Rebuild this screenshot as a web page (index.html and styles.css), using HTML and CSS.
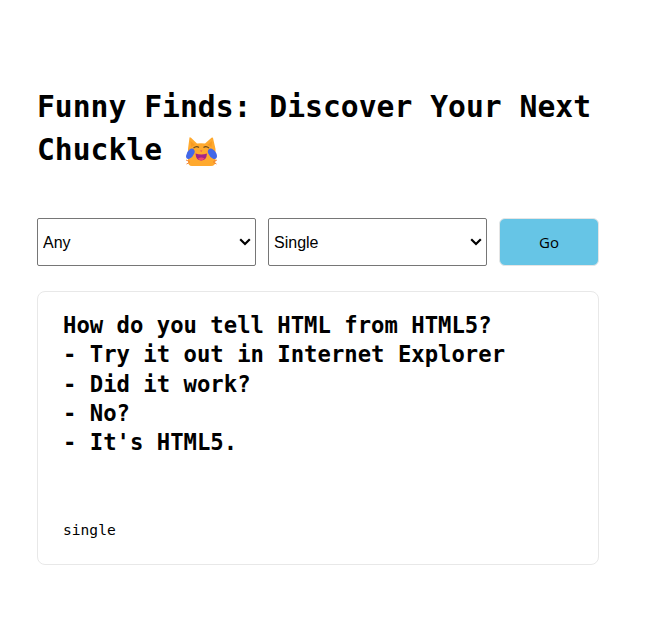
FILE: index.html
```html
<!DOCTYPE html>
<html lang="en">
<head>
<meta charset="utf-8">
<title>Funny Finds</title>
<link rel="stylesheet" href="styles.css">
</head>
<body>
<main class="page">
  <h1 class="title">Funny Finds: Discover Your Next Chuckle <svg class="cat" viewBox="0 0 32 29" width="32" height="29" aria-label="cat with tears of joy"><path d="M3.5 0.5 Q4 0 5 0.8 L11 6.5 Q15 6 19 6.5 L25.5 0.8 Q26.8 0 27 1 L29.5 12 L29.5 24 Q29.5 29 25 29 L6 29 Q2 29 2 24 L2 12Z" fill="#ffa92e"/><path d="M4.5 4 L9 8 L5 10Z M26 4 L21.5 8 L25.5 10Z" fill="#f79a22"/><path d="M7.5 11 Q10.5 8.5 13 10.5 M17.5 10.5 Q20 8.5 23 11" fill="none" stroke="#6b4a1c" stroke-width="1.2"/><path d="M14 13.5 H16.5 L15.2 15Z" fill="#e8486a"/><path d="M9.5 16.5 Q15.2 18.5 21 16.5 Q20.5 23.5 15.2 23.5 Q10 23.5 9.5 16.5Z" fill="#a3248a"/><path d="M12 21.5 Q15.2 19.5 18.5 21.5 Q17 23.5 15.2 23.5 Q13.5 23.5 12 21.5Z" fill="#ef486e"/><path d="M6.5 11.5 Q9.5 13 8.5 16 Q7 20 3 22 Q0 22.5 0 19 Q0.3 15 3.5 12.5 Q5 11 6.5 11.5Z M24 11.5 Q21 13 22 16 Q23.5 20 27.5 22 Q31 22.5 31 19 Q30.7 15 27 12.5 Q25.5 11 24 11.5Z" fill="#4368e8"/><path d="M0 23 L3.5 24.5 M0.5 27 L3.5 25.5 M31 23 L27.5 24.5 M30.5 27 L27.5 25.5" stroke="#ef7a2c" stroke-width="0.9"/></svg></h1>
  <form class="controls">
    <select class="picker"><option>Any</option></select>
    <select class="picker"><option>Single</option></select>
    <button class="go" type="button">Go</button>
  </form>
  <section class="card">
    <p class="joke">How do you tell HTML from HTML5?<br>- Try it out in Internet Explorer<br>- Did it work?<br>- No?<br>- It's HTML5.</p>
    <p class="kind">single</p>
  </section>
</main>
</body>
</html>
```
FILE: styles.css
```css
html, body {
  margin: 0;
  background: #fff;
}
.page {
  width: 562px;
  margin-left: 37px;
  padding-top: 85px;
  font-family: "DejaVu Sans Mono", monospace;
  color: #000;
}
.title {
  margin: 0 0 47px;
  font-size: 29.7px;
  line-height: 43px;
  font-weight: 700;
}
.cat {
  vertical-align: -6px;
  margin-left: 6px;
}
.controls {
  display: flex;
  gap: 12px;
  height: 48px;
}
.picker {
  width: 219px;
  height: 48px;
  box-sizing: border-box;
  padding: 0 5px;
  appearance: none;
  background: #fff url("data:image/svg+xml,%3Csvg xmlns='http://www.w3.org/2000/svg' width='12' height='8'%3E%3Cpath d='M1.2 1.2 L6 6 L10.8 1.2' fill='none' stroke='%23000' stroke-width='2.2'/%3E%3C/svg%3E") no-repeat right 4px center;
  border: 1px solid #767676;
  border-radius: 2px;
  font-family: "Liberation Sans", sans-serif;
  font-size: 16px;
  color: #000;
}
.go {
  width: 100px;
  height: 48px;
  box-sizing: border-box;
  border: 1px solid #e5e5e5;
  border-radius: 6px;
  background: #66c5e6;
  font-family: "Open Sans", sans-serif;
  font-size: 15px;
  color: #000;
}
.card {
  margin-top: 25px;
  height: 274px;
  box-sizing: border-box;
  padding: 19px 25px 0;
  border: 1px solid #e8e8e8;
  border-radius: 8px;
  display: flex;
  flex-direction: column;
}
.joke {
  margin: 0;
  font-size: 22.25px;
  line-height: 29.3px;
  font-weight: 700;
}
.kind {
  margin: 63px 0 0;
  font-size: 14.6px;
  line-height: 20px;
}
```
